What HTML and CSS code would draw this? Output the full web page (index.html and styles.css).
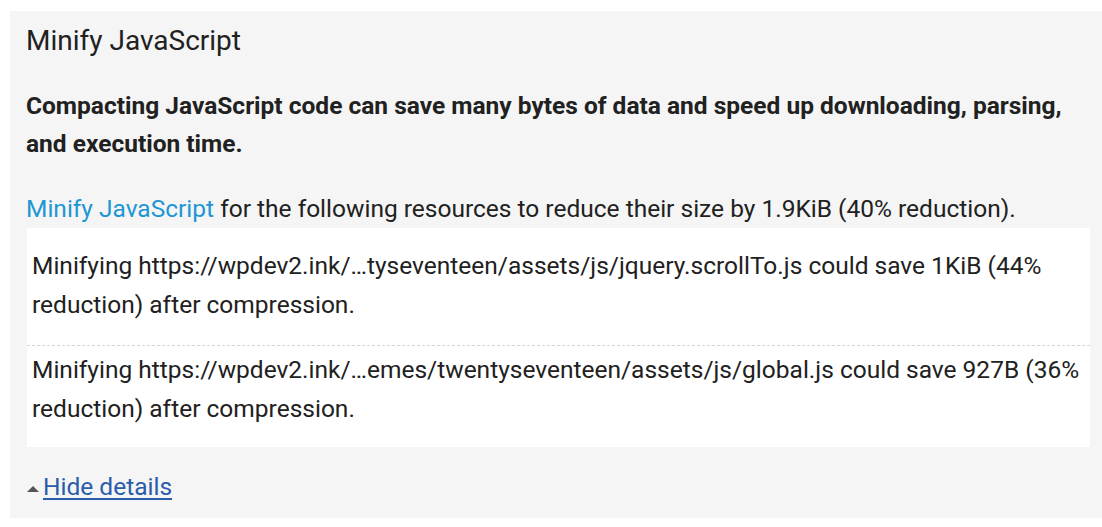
FILE: index.html
```html
<!DOCTYPE html>
<html lang="en">
<head>
<meta charset="utf-8">
<title>Minify JavaScript</title>
<link rel="stylesheet" href="styles.css">
</head>
<body>
<div class="panel">
  <h2 class="title">Minify JavaScript</h2>
  <p class="summary">Compacting JavaScript code can save many bytes of data and speed up downloading, parsing, and execution time.</p>
  <p class="lead"><a class="doc-link" href="#">Minify JavaScript</a> for the following resources to reduce their size by 1.9KiB (40% reduction).</p>
  <div class="list">
    <div class="row">Minifying https://wpdev2.ink/…tyseventeen/assets/js/jquery.scrollTo.js could save 1KiB (44% reduction) after compression.</div>
    <div class="row">Minifying https://wpdev2.ink/…emes/twentyseventeen/assets/js/global.js could save 927B (36% reduction) after compression.</div>
  </div>
  <div class="toggle"><span class="caret"></span><a class="toggle-link" href="#">Hide details</a></div>
</div>
</body>
</html>
```
FILE: styles.css
```css
html, body {
  margin: 0;
  padding: 0;
  background: #ffffff;
}
body {
  font-family: Roboto, "Liberation Sans", Arial, sans-serif;
  color: #212121;
  padding: 11px 0 0 10px;
}
.panel {
  background: #f5f5f5;
  padding: 13px 12px 11px 16px;
}
.title {
  margin: 0;
  font-size: 28px;
  line-height: 33.6px;
  font-weight: 400;
  color: #212121;
}
.summary {
  margin: 29px 0 0;
  font-size: 24.5px;
  line-height: 38.5px;
  font-weight: 700;
  color: #212121;
}
.lead {
  margin: 26px 0 0;
  font-size: 24.5px;
  line-height: 38.5px;
}
.doc-link {
  color: #2196d3;
  text-decoration: none;
}
.list {
  background: #ffffff;
  margin: 0 0 0 1px;
  padding-top: 14px;
}
.row {
  font-size: 24.5px;
  line-height: 38.5px;
  padding: 5px 6px 21px 5px;
}
.row + .row {
  border-top: 1px dashed #d6d6d6;
  padding-bottom: 19px;
}
.toggle {
  margin-top: 21px;
  font-size: 24.5px;
  line-height: 38.5px;
  display: flex;
  align-items: center;
}
.caret {
  width: 0;
  height: 0;
  border-left: 6px solid transparent;
  border-right: 6px solid transparent;
  border-bottom: 6px solid #555555;
  margin: 4px 4px 0 1px;
}
.toggle-link {
  color: #2a5caa;
  text-decoration: underline;
  text-decoration-thickness: 2px;
  text-underline-offset: 3px;
}
```
